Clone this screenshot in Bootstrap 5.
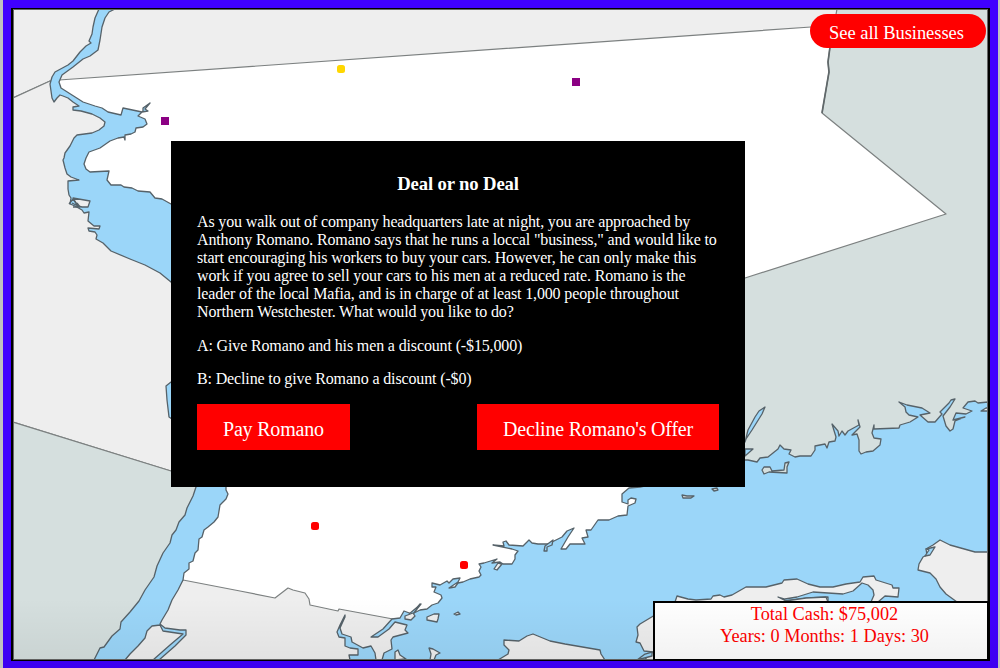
<!DOCTYPE html>
<html lang="en">
<head>
<meta charset="utf-8">
<meta name="viewport" content="width=device-width, initial-scale=1">
<title>Westchester Tycoon</title>
<link href="https://cdn.jsdelivr.net/npm/bootstrap@5.3.0/dist/css/bootstrap.min.css" rel="stylesheet">
<style>
  body { background: #c0c0c0; font-family: "Liberation Serif", "Times New Roman", serif; padding: 0 2px 0 3px; }
  .game-frame { background: #4000ff; padding: 8px 8px 7px; }
  .game-board { border: 2px solid #000; border-width: 1px 2px; }
  .game-map { inset: 0; }
  .map-line { stroke: #566269; stroke-width: 1.3; stroke-linejoin: round; }
  .county { stroke: #7c8080; stroke-width: 1.2; }
  .pin { width: 8px; height: 8px; }
  .pin-dot { border-radius: 2.5px; }
  .btn-game { --bs-btn-color: #fff; --bs-btn-bg: #f00; --bs-btn-border-width: 0; --bs-btn-hover-bg: #d00; --bs-btn-hover-color: #fff; --bs-btn-font-size: 20px; --bs-btn-line-height: 22px; --bs-btn-border-radius: 0; --bs-btn-padding-x: 26px; letter-spacing: -.2px; padding-top: 14px; padding-bottom: 10px; }
  .btn-game.btn-all { --bs-btn-font-size: 18.5px; --bs-btn-padding-x: 0; width: 176px; height: 34px; top: 5px; right: 2px; padding: 8px 3px 4px 0; letter-spacing: -.05px; }
  .deal { width: 574px; height: 346px; left: 158px; top: 132px; padding: 32px 26px; font-size: 16px; line-height: 18px; letter-spacing: -.14px; }
  .deal h3 { font-size: 18.72px; line-height: 22px; margin-bottom: 18px; font-weight: 700; }
  .deal p { margin-bottom: 15.5px; white-space: nowrap; }
  .status-box { width: 336px; height: 60px; right: -1px; bottom: -1px; border: 2px solid #000; background: #fff; color: #f00; font-size: 18.3px; line-height: 22px; padding-left: 7px; }
  .shade { height: 70px; background: linear-gradient(rgba(0,0,0,0), rgba(0,0,0,.06)); pointer-events: none; }
</style>
</head>
<body class="overflow-hidden vh-100">
<main class="game-frame d-flex h-100 position-relative">
  <section class="game-board position-relative flex-fill">
    <svg class="game-map position-absolute w-100 h-100" viewBox="13 9 975 651" preserveAspectRatio="none" fill="none" aria-hidden="true">
      <rect x="13" y="9" width="975" height="651" fill="#fff"/>
      <!-- counties -->
      <g class="map-line county">
        <path fill="#eee" d="M13 9H838L836 26L811 27L59 80L50 81L13 98Z"/>
        <path fill="#eee" d="M13 98L50 81L57 92L75 99L95 109L115 122L110 132L80 150L78 165L100 190L120 230L171 270L195 300V400L205 480L171 471L13 422Z"/>
        <path fill="#d5dfde" d="M13 422L171 471L205 480L206 495L165 590L110 660H13Z"/>
        <path fill="#d5dfde" d="M837 9L830 47L828 62L829 72L822 113L946 214L745 278L700 293V520H988V9Z"/>
        <path fill="#eee" d="M183 580L240 591L275 598L288 588L293 590L305 593L309 599L310 605L338 611L339 609L393 619L402 618L440 660H125Z"/>
      </g>
      <path d="M830 47L828 62L829 72L822 113" stroke="#60686a" stroke-width="1.7"/>
      <!-- Hudson River -->
      <path class="map-line" fill="#9bd6f9" d="M99 9L95 18L93 27L92 34L89 41L91 43L86 46L80 52L73 61L68 65L55 72L52 77L50 84L51 91L52 98L54 102L57 98L60 95L63 96L68 98L73 102L79 106L73 107L73 110L81 111L92 114L100 118L105 122L104 126L99 130L92 133L77 135L74 138L70 146L65 153L64 158L63 160L65 168L67 174L71 177L79 180L68 181V189L69 195L71 198L70 204L75 206L82 210L84 213L89 212L88 221L94 226H100L99 229L88 228L89 231L95 232L97 235L96 239L103 243L111 251L130 259L145 265L160 273L171 282L190 310L190 370L171 382L166 386L167 400L169 417L175 421L196 487L193 496L190 502L187 508L185 515L179 522L176 530L172 535L170 543L163 553L157 566L154 577L145 590L139 601L130 612L121 622L120 629L112 636L104 647L100 648L98 652L94 660H125L130 654L138 646L145 638L147 631L152 626L160 625L163 631L183 634L170 645L153 660H159L175 646L186 635L186 630L180 630L165 628L160 624L162 620L168 610L172 600L178 590L183 580L184 573L189 569V563L193 561L195 553L198 550L199 539L202 537L204 530L208 527L214 522L218 517L220 505L226 499L228 494L226 490V487L240 420L245 250L171 204L162 199L155 198L150 192L138 191L132 188L124 187L121 185H111L107 180L109 171L90 172L86 169L84 164L86 158L89 152L100 148L110 141L118 138L124 137L125 140V135L131 134L135 132L136 128L143 127L147 124L145 119L138 116L143 111L143 108L150 103L145 109L148 111L142 112L123 108L121 115L108 112L102 108L95 106L83 102L72 95L61 88L59 82L62 75L73 67L83 59L90 56L98 50L100 40L102 27L105 18L109 12L115 9Z"/>
      <path class="map-line" fill="#eee" d="M73 198L90 201L88 207L82 207L78 206Z"/>
      <path class="map-line" d="M69 204L73 199L78 206L72 203M77 203L80 207L73 207"/>
      <!-- Long Island Sound -->
      <path class="map-line" fill="#9bd6f9" d="M382 660L384 653L392 649L391 640L393 637L408 633L405 630L407 625L395 622L389 629L378 637H371L383 629L392 619L400 618L404 611L412 614L420 604L414 613L420 610L427 609L432 605L438 603L442 598L441 595L434 592L436 587L432 587L432 583L440 585L447 581L449 583L453 579L460 578L458 582L449 588L455 587L458 583L463 582L470 579L479 577L481 575L479 571L481 567L479 564L484 563L497 559L492 563L500 562L503 564H512L515 559L515 555L518 551L512 549L493 545L504 546L503 542L506 541L509 545L523 546L529 540L532 543L538 544H548L562 537L567 531L574 528L568 537L561 549H566L570 544H585L582 538L588 537L586 530L591 530L598 520H609L618 516L627 515L628 506L635 503L636 499L631 498L628 500V504L622 502L622 494L629 488L640 487L720 470L745 460L748 460L757 462L760 458L768 457L778 449L780 445L784 449L791 450L789 454L795 457L800 456H811L815 450V446L825 444L827 448L829 442L835 441L836 437L832 424L838 431L839 436L842 431L845 435L848 431L859 425L858 420L860 427L852 435L857 434L859 440L859 451L861 454L866 452L873 451L880 445L881 439L874 438L872 433L874 425L874 429L899 428L900 425L910 422L918 417L909 415L906 412L905 407L899 402L907 405L922 408L930 413L920 415L928 422H935L942 414L940 412L949 403L951 400L955 399L950 407L943 416L946 426L950 431L953 429L955 421L965 417L953 420L956 413L966 414L972 411L963 408L968 402L975 401L978 403L988 402V660Z"/>
      <g class="map-line" fill="#9bd6f9">
        <path d="M345 615L340 625L337 632L339 637L345 638L345 646L350 648L358 649V655H349L350 660H376L375 653L371 646L363 648L352 642L351 637L342 634L340 628L345 617Z"/>
        <path d="M745 442L748 430L755 417L759 411L765 407L762 414L752 430L746 439ZM745 449L753 449L745 456Z"/>
        <path d="M409 614L421 604L413 614"/>
        <path d="M544 551L545 546L553 540L552 545L547 547L547 551Z"/>
      </g>
      <g class="map-line" fill="#eee">
        <path d="M405 616L413 613L415 616L411 620L405 619Z"/>
        <path d="M427 617L434 614L439 614L438 619L437 622L427 620ZM454 614L458 612L460 614L456 615ZM395 652L398 650L400 655L406 659L395 660ZM429 648L433 649L440 653L436 655L434 660H430L431 654Z"/>
        <path d="M494 569L498 563L502 564L497 570ZM682 495L687 496L694 496L691 498L683 498ZM712 489L717 488L718 490L714 491Z"/>
        <path fill="#d5dfde" d="M785 463L789 462L787 467V473L769 472L764 474L762 470L764 467L770 467L772 471L784 470Z"/>
        <!-- Long Island -->
        <path d="M498 660L508 654L509 650L504 645V640L519 641L527 636L533 634L550 641L565 644L600 650L601 654L605 660ZM655 615L640 624L637 627L638 635L636 642L640 643L644 651L653 652L644 660H680Z"/>
        <path d="M675 602L677 596L688 599L696 600L711 599L713 596L720 595L724 597L732 595L746 587L766 587L782 583L784 580L797 579L808 584L820 587L833 587L846 584L860 582L863 577L874 576L876 580L892 585L893 588L899 588L898 597L885 596L878 602Z"/>
        <path d="M988 552L975 552L950 545L940 540L933 545L926 549L927 555L923 557L919 564L918 570L930 573L936 579L940 587L946 594L957 602H988ZM981 411L986 408H988V411Z"/>
      </g>
      <g class="map-line" fill="#9bd6f9">
        <path d="M778 597L785 599L797 597L813 592L843 594L853 591L862 583L868 585L873 590L874 595L871 602H828V597L808 598L786 601Z"/>
        <path d="M926 549L935 547L930 555L925 556L929 550ZM637 660L645 654L652 652V656Z"/>
      </g>
      <path class="map-line" fill="#eee" d="M785 601L806 598L826 597L828 602H785Z"/>
      <path stroke="#666" d="M13.5 660V9.5H987.5V659.5H13"/>
    </svg>

    <span class="pin pin-dot position-absolute" style="left:324px;top:56px;background:#ffd700"></span>
    <span class="pin position-absolute" style="left:559px;top:69px;background:#8b0083"></span>
    <span class="pin position-absolute" style="left:148px;top:108px;background:#8b0083"></span>
    <span class="pin pin-dot position-absolute" style="left:298px;top:513px;background:#f00"></span>
    <span class="pin pin-dot position-absolute" style="left:447px;top:552px;background:#f00"></span>

    <button class="btn btn-game btn-all rounded-pill position-absolute" type="button">See all Businesses</button>

    <div class="deal position-absolute bg-black text-white">
      <h3 class="text-center">Deal or no Deal</h3>
      <p>As you walk out of company headquarters late at night, you are approached by<br>
      Anthony Romano. Romano says that he runs a loccal "business," and would like to<br>
      start encouraging his workers to buy your cars. However, he can only make this<br>
      work if you agree to sell your cars to his men at a reduced rate. Romano is the<br>
      leader of the local Mafia, and is in charge of at least 1,000 people throughout<br>
      Northern Westchester. What would you like to do?</p>
      <p>A: Give Romano and his men a discount (-$15,000)</p>
      <p>B: Decline to give Romano a discount (-$0)</p>
      <div class="d-flex justify-content-between">
        <button class="btn btn-game" type="button">Pay Romano</button>
        <button class="btn btn-game" type="button">Decline Romano's Offer</button>
      </div>
    </div>

    <div class="status-box position-absolute text-center">
      <div>Total Cash: $75,002</div>
      <div>Years: 0 Months: 1 Days: 30</div>
    </div>
  </section>
  <div class="shade position-absolute start-0 end-0 bottom-0"></div>
</main>
<script src="https://cdn.jsdelivr.net/npm/bootstrap@5.3.0/dist/js/bootstrap.bundle.min.js"></script>
</body>
</html>
